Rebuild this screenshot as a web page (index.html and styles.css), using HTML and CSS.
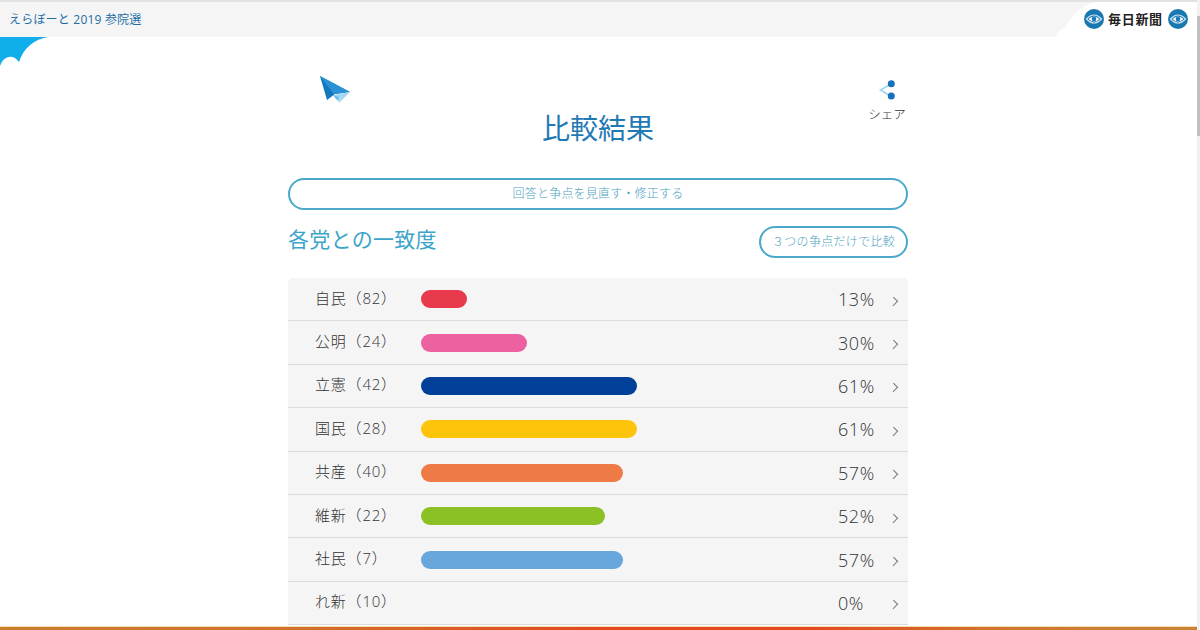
FILE: index.html
```html
<!DOCTYPE html>
<html lang="ja">
<head>
<meta charset="utf-8">
<title>えらぼーと 2019 参院選</title>
<link rel="stylesheet" href="styles.css">
</head>
<body>
<header class="topbar">
  <span class="brand">えらぼーと 2019 参院選</span>
  <div class="logo">
    <svg class="logo-tab" viewBox="0 0 142 35" preserveAspectRatio="none"><path d="M0 35Q3 27 10 26Q22 3 42 0H142V35Z" fill="#fff"/></svg>
    <svg class="eye" viewBox="0 0 20 20"><use href="#eye-mark"/></svg>
    <span class="logo-text">毎日新聞</span>
    <svg class="eye" viewBox="0 0 20 20"><use href="#eye-mark"/></svg>
  </div>
</header>
<svg class="defs" width="0" height="0">
  <defs>
    <g id="eye-mark">
      <circle cx="10" cy="10" r="10" fill="#1a78b0"/>
      <path d="M2.500 10Q10 2 17.500 10Q10 18 2.500 10Z" fill="none" stroke="#cfe6f3" stroke-width="1.200"/>
      <path d="M4.500 10Q10 5 15.500 10Q10 15 4.500 10Z" fill="#fff"/>
      <circle cx="10" cy="10" r="2.300" fill="#1a78b0"/>
    </g>
  </defs>
</svg>
<svg class="corner" viewBox="0 0 50 30"><path d="M0 0H48Q26 4 19 25Q13 17 6 21Q2 23 0 29Z" fill="#10aeea"/></svg>
<main class="page">
  <div class="hero">
    <svg class="plane" viewBox="0 0 32 30">
      <path d="M0 1L30 17L15 19L7 25Z" fill="#1478bd"/>
      <path d="M0 1L14 19L30 17Z" fill="#2a93d6"/>
      <path d="M13 20L30 17L19 28L18 24Z" fill="#a5d8f3"/>
      <path d="M13 20L19 22L18 26L16 24Z" fill="#6fbbe8"/>
    </svg>
    <h1 class="title">比較結果</h1>
    <div class="share">
      <svg class="share-icon" viewBox="0 0 20 22">
        <path d="M14 6L3.500 12L14 18.500" fill="none" stroke="#9cd4f0" stroke-width="1.600"/>
        <circle cx="14.300" cy="5.700" r="3.500" fill="#1570bd"/>
        <circle cx="14.300" cy="18" r="3.500" fill="#1570bd"/>
      </svg>
      <span class="share-label">シェア</span>
    </div>
  </div>
  <a class="btn btn-wide"><span class="btn-text">回答と争点を見直す・修正する</span></a>
  <div class="section-head">
    <h2 class="section-title">各党との一致度</h2>
    <a class="btn btn-small"><span class="btn-text">３つの争点だけで比較</span></a>
  </div>
  <ul class="list">
    <li class="row"><span class="party">自民（82）</span><span class="track"><span class="bar red" style="width:46px"></span></span><span class="pct">13%</span><span class="chev"></span></li>
    <li class="row"><span class="party">公明（24）</span><span class="track"><span class="bar pink" style="width:106px"></span></span><span class="pct">30%</span><span class="chev"></span></li>
    <li class="row"><span class="party">立憲（42）</span><span class="track"><span class="bar navy" style="width:216px"></span></span><span class="pct">61%</span><span class="chev"></span></li>
    <li class="row"><span class="party">国民（28）</span><span class="track"><span class="bar yellow" style="width:216px"></span></span><span class="pct">61%</span><span class="chev"></span></li>
    <li class="row"><span class="party">共産（40）</span><span class="track"><span class="bar orange" style="width:202px"></span></span><span class="pct">57%</span><span class="chev"></span></li>
    <li class="row"><span class="party">維新（22）</span><span class="track"><span class="bar green" style="width:184px"></span></span><span class="pct">52%</span><span class="chev"></span></li>
    <li class="row"><span class="party">社民（7）</span><span class="track"><span class="bar blue" style="width:202px"></span></span><span class="pct">57%</span><span class="chev"></span></li>
    <li class="row"><span class="party">れ新（10）</span><span class="track"></span><span class="pct">0%</span><span class="chev"></span></li>
  </ul>
</main>
<div class="footer-strip"></div>
<div class="scrollbar"><div class="thumb"></div></div>
</body>
</html>
```
FILE: styles.css
```css
* { box-sizing: border-box; }
html, body { margin: 0; padding: 0; height: 630px; overflow: hidden; background: #fff; }
body {
  font-family: "Open Sans", "Noto Sans CJK JP", sans-serif;
  font-weight: 300;
  color: #333;
  position: relative;
}
.defs { position: absolute; }
.topbar {
  height: 37px;
  margin-right: 3px;
  background: #f5f5f5;
  border-top: 2px solid #e2e2e2;
  display: flex;
  justify-content: space-between;
  align-items: center;
  padding: 0 0 0 9px;
}
.brand {
  font-size: 12px;
  font-weight: 400;
  color: #1d6fa5;
  letter-spacing: .2px;
  line-height: 35px;
}
.logo {
  width: 142px;
  height: 35px;
  position: relative;
  display: flex;
  align-items: center;
  gap: 4px;
  padding: 0 0 0 29px;
}
.logo-tab { position: absolute; left: 0; top: 0; width: 142px; height: 35px; }
.eye { width: 20px; height: 20px; flex: none; position: relative; top: -1px; }
.logo-text {
  font-family: "Noto Sans CJK JP", serif;
  font-weight: 700;
  font-size: 13px;
  letter-spacing: .7px;
  color: #222;
  white-space: nowrap;
  position: relative;
  width: 55px;
  top: -1px;
}
.logo-text + .eye { margin-left: 1px; }
.corner { position: absolute; left: 0; top: 37px; width: 50px; height: 30px; }
.page { width: 620px; margin: 0 0 0 288px; }
.hero { height: 141px; position: relative; display: flex; justify-content: center; }
.plane { position: absolute; left: 32px; top: 38px; width: 32px; height: 30px; }
.title {
  margin: 72px 0 0;
  font-size: 28px;
  line-height: 38px;
  height: 38px;
  font-weight: 400;
  color: #1f7ab4;
}
.share { position: absolute; right: 0; top: 41px; width: 42px; display: flex; flex-direction: column; align-items: center; }
.share-icon { width: 20px; height: 22px; }
.share-label { font-size: 12.500px; line-height: 18px; margin-top: 6px; color: #333; white-space: nowrap; }
.btn {
  display: flex;
  align-items: center;
  justify-content: center;
  border: 2px solid #4ca9c9;
  background: #fff;
  color: #4f9fc0;
  font-size: 12px;
  border-radius: 16px;
  height: 32px;
}
.btn-text { position: relative; top: -1px; }
.btn-wide { width: 620px; letter-spacing: .2px; }
.section-head { display: flex; justify-content: space-between; align-items: flex-start; margin-top: 16px; height: 52px; }
.section-title { margin: -3px 0 0; font-size: 21px; line-height: 32px; font-weight: 400; color: #3ba4c9; letter-spacing: .3px; }
.btn-small { width: 149px; font-size: 12px; letter-spacing: .3px; }
.list { list-style: none; margin: 0; padding: 0; background: #f5f5f5; border-radius: 5px 5px 0 0; }
.row {
  height: 43.400px;
  display: flex;
  align-items: center;
  border-bottom: 1px solid #dcdcdc;
  padding-left: 27px;
  font-size: 15px;
}
.party { width: 106px; flex: none; white-space: nowrap; padding-bottom: 4px; font-size: 15px; letter-spacing: .8px; font-weight: 300; }
.track { width: 417px; flex: none; display: flex; }
.bar { display: block; height: 18px; border-radius: 9px; }
.red { background: #e93a4d; }
.pink { background: #ec62a0; }
.navy { background: #004098; }
.yellow { background: #fec40b; }
.orange { background: #ee7a45; }
.green { background: #8cc126; }
.blue { background: #67a7db; }
.pct { width: 55px; flex: none; font-size: 18px; letter-spacing: .6px; font-weight: 300; color: #333; }
.chev {
  width: 7px;
  height: 7px;
  flex: none;
  margin-left: -3px;
  border-top: 1px solid #777;
  border-right: 1px solid #777;
  transform: rotate(45deg) scaleX(.9);
  position: relative;
  top: 2px;
}
.footer-strip {
  position: absolute;
  left: 0;
  right: 3px;
  bottom: 0;
  height: 4px;
  border-top: 1px solid #f5dcb8;
  background: linear-gradient(90deg, #c97f2c 0%, #d2702a 25%, #e3491f 50%, #e44a1f 68%, #cf7a2e 85%, #c98433 100%);
}
.scrollbar { position: absolute; right: 0; top: 0; width: 3px; height: 630px; background: #f1f1f1; }
.thumb { position: absolute; top: 16px; left: 0; width: 3px; height: 120px; background: #c1c1c1; }
```
